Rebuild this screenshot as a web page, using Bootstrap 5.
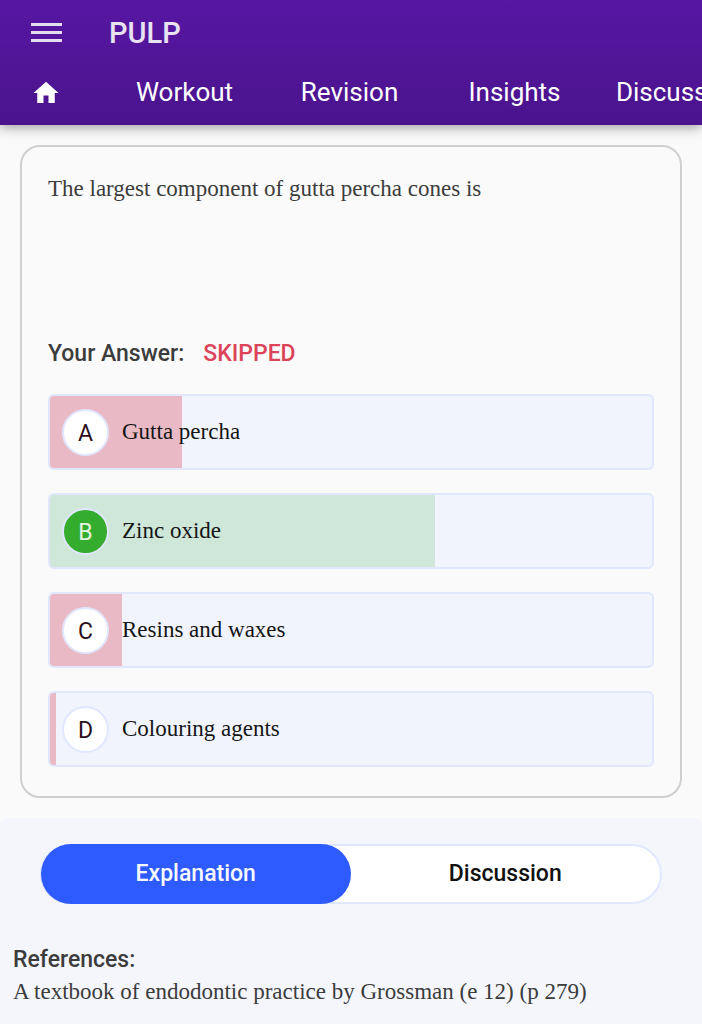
<!DOCTYPE html>
<html lang="en">
<head>
<meta charset="utf-8">
<meta name="viewport" content="width=device-width, initial-scale=1">
<title>PULP</title>
<link href="https://cdn.jsdelivr.net/npm/bootstrap@5.3.0/dist/css/bootstrap.min.css" rel="stylesheet">
<style>
  body { background: #fafafa; color: #3c3c3c; font-family: Roboto, sans-serif; font-size: 23px; line-height: 32px; min-height: 100vh; overflow-x: hidden; }
  .app-header { background: linear-gradient(#5716a3, #4a148c); box-shadow: 0 2px 12px rgba(0,0,0,.4); padding-bottom: 8px; }
  .app-bar { height: 66px; padding: 0 30px; gap: 46px; }
  .app-title { font-size: 29px; font-weight: 500; color: #e9e2f2; }
  .menu-btn { width: 33px; height: 32px; color: #e4dcef; }
  .app-tabs { height: 51px; overflow: hidden; }
  .app-tabs a { flex: 0 0 165px; text-align: center; color: #fff; font-size: 26px; text-decoration: none; }
  .app-tabs .home-tab { flex-basis: 102px; padding: 2px 10px 0 0; display: flex; justify-content: center; }
  .question-card { border: 2px solid #cfcfcf; border-radius: 20px; margin: 20px 20px 0; padding: 26px 26px 29px; }
  .serif-text { font-family: "Liberation Serif", serif; font-size: 23px; }
  .question-text { min-height: 165px; margin: 0; }
  .answer-line { font-weight: 500; gap: 19px; margin-bottom: 24px; }
  .skipped { color: #dc4459; }
  .option-list { gap: 23px; }
  .option-row { height: 76px; border: 2px solid #e0e7ff; border-radius: 6px; background: linear-gradient(var(--fill), var(--fill)) no-repeat 0 0 / var(--share) 100% #f1f4fd; padding-left: 12px; gap: 13px; color: #151515; }
  .is-wrong { --fill: #e9bac5; }
  .is-right { --fill: #cfe7d8; }
  .option-key { width: 47px; height: 47px; border: 2px solid #e0e7ff; border-radius: 50%; background: #fff; color: #2b0f1d; padding-top: 3px; }
  .is-right .option-key { background: #34ac2e; color: #e3f3e0; }
  .detail-panel { background: #f4f6fc; border-radius: 8px 8px 0 0; margin-top: 20px; padding: 26px 13px; }
  .pill-tabs { margin: 0 27px; height: 60px; border: 2px solid #e0e7ff; border-radius: 30px; background: #fff; }
  .pill-tabs button { flex: 1 1 0; border: 0; border-radius: 30px; background: transparent; font-weight: 500; color: #111; margin: -2px 0; padding: 0; }
  .pill-tabs button.active { background: #2e5bff; color: #f6f8ff; margin-left: -1px; }
  .references { margin-top: 39px; }
  .references h2 { font-size: 23px; line-height: 33px; font-weight: 500; margin: 0; }
</style>
</head>
<body class="d-flex flex-column">
<header class="app-header">
  <div class="app-bar d-flex align-items-center">
    <button class="menu-btn border-0 bg-transparent p-0 d-flex align-items-center" type="button" aria-label="Menu">
      <svg width="33" height="22" viewBox="0 0 33 22" fill="currentColor"><path d="M1 1h31v3H1zM1 9h31v3H1zM1 17h31v3H1z"/></svg>
    </button>
    <span class="app-title">PULP</span>
  </div>
  <nav class="app-tabs d-flex align-items-center">
    <a class="home-tab" href="#" aria-label="Home">
      <svg width="30" height="30" viewBox="0 0 24 24" fill="currentColor"><path d="M10 20v-6h4v6h5v-8h3L12 3 2 12h3v8z"/></svg>
    </a>
    <a href="#">Workout</a>
    <a href="#">Revision</a>
    <a href="#">Insights</a>
    <a href="#">Discussion</a>
  </nav>
</header>
<main class="d-flex flex-column flex-grow-1">
  <section class="question-card">
    <p class="question-text serif-text">The largest component of gutta percha cones is</p>
    <div class="answer-line d-flex"><span>Your Answer:</span><span class="skipped">SKIPPED</span></div>
    <ul class="option-list list-unstyled d-flex flex-column mb-0">
      <li class="option-row is-wrong d-flex align-items-center" style="--share:22%"><span class="option-key d-flex align-items-center justify-content-center">A</span><span class="serif-text">Gutta percha</span></li>
      <li class="option-row is-right d-flex align-items-center" style="--share:64%"><span class="option-key d-flex align-items-center justify-content-center">B</span><span class="serif-text">Zinc oxide</span></li>
      <li class="option-row is-wrong d-flex align-items-center" style="--share:12%"><span class="option-key d-flex align-items-center justify-content-center">C</span><span class="serif-text">Resins and waxes</span></li>
      <li class="option-row is-wrong d-flex align-items-center" style="--share:1%"><span class="option-key d-flex align-items-center justify-content-center">D</span><span class="serif-text">Colouring agents</span></li>
    </ul>
  </section>
  <section class="detail-panel flex-grow-1">
    <div class="pill-tabs d-flex" role="tablist">
      <button class="active" type="button" role="tab" aria-selected="true">Explanation</button>
      <button type="button" role="tab" aria-selected="false">Discussion</button>
    </div>
    <div class="references">
      <h2>References:</h2>
      <p class="serif-text mb-0">A textbook of endodontic practice by Grossman (e 12) (p 279)</p>
    </div>
  </section>
</main>
<script src="https://cdn.jsdelivr.net/npm/bootstrap@5.3.0/dist/js/bootstrap.bundle.min.js"></script>
</body>
</html>
